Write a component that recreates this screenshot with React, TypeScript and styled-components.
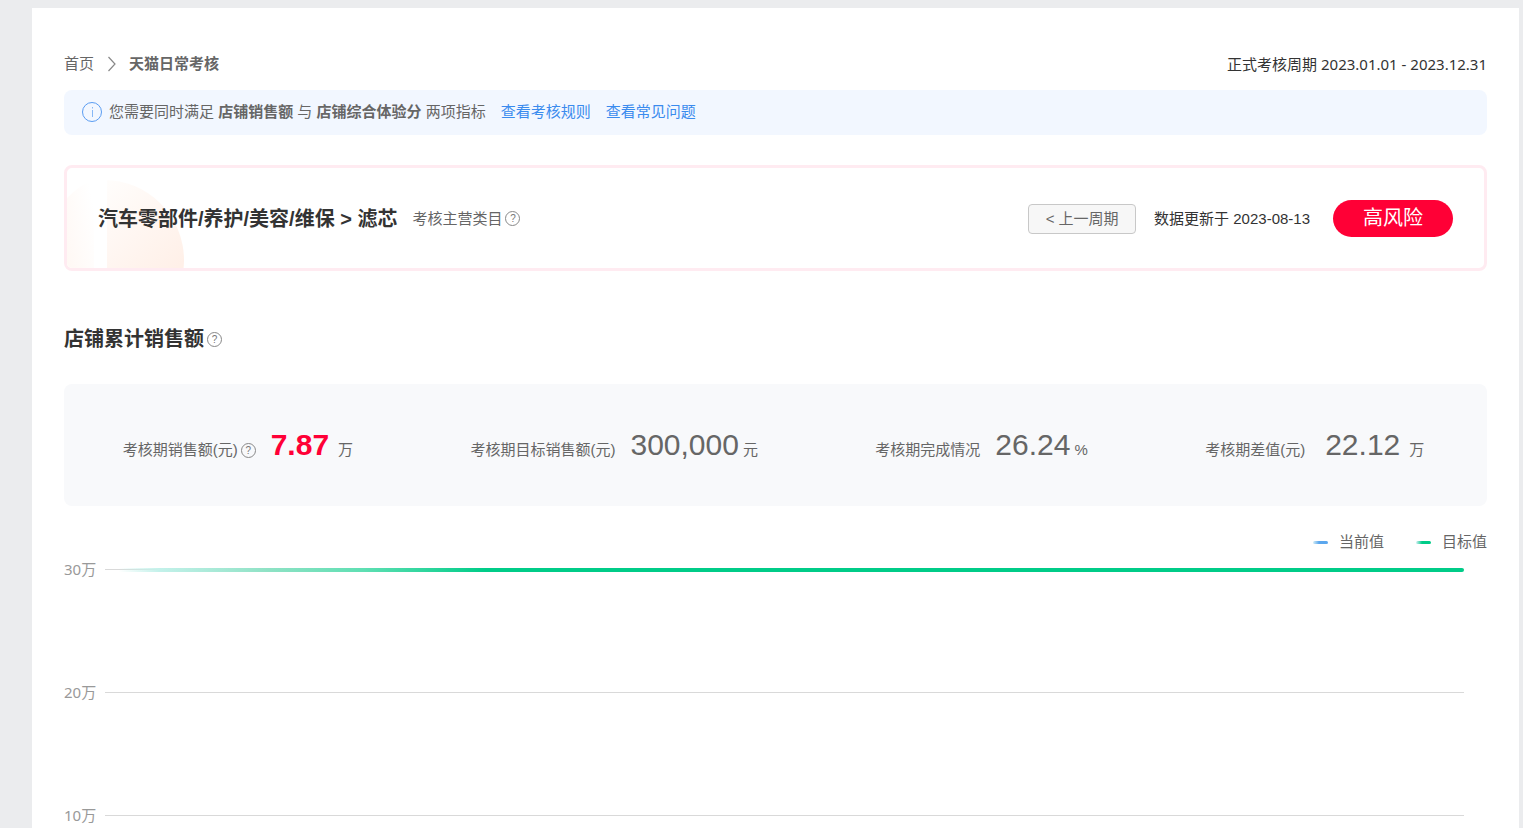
import React from "react";
import styled, { createGlobalStyle } from "styled-components";

const GlobalStyle = createGlobalStyle`
  * { box-sizing: border-box; }
  body {
    margin: 0;
    background: #ebecee;
    color: #333;
    font: 15px/20px "Liberation Sans", "Noto Sans CJK SC", sans-serif;
  }
`;

const Shell = styled.div`
  min-height: 100vh;
  padding: 8px 4px 0 32px;
  display: flex;
  flex-direction: column;
`;

const Page = styled.main`
  flex: 1;
  background: #fff;
  padding: 46px 32px 0;
`;

const TopBar = styled.header`
  display: flex;
  align-items: center;
  justify-content: space-between;
  margin-bottom: 16px;
`;

const Breadcrumb = styled.nav`
  display: flex;
  align-items: center;
  color: #666;
  svg { margin: 0 12px 0 13px; }
`;

const CrumbLink = styled.a`
  color: #666;
  text-decoration: none;
`;

const Period = styled.span`
  font-family: "Noto Sans", "Noto Sans CJK SC", sans-serif;
`;

const Notice = styled.section`
  display: flex;
  align-items: center;
  height: 45px;
  padding: 0 18px 2px;
  border-radius: 8px;
  background: #f2f7ff;
  color: #666;
  svg { margin-right: 7px; }
`;

const NoticeLink = styled.a`
  margin-left: 15px;
  color: #3a8bee;
  text-decoration: none;
`;

const CategoryCard = styled.section`
  position: relative;
  display: flex;
  align-items: center;
  height: 106px;
  margin-top: 30px;
  padding: 1px 31px 0;
  border: 3px solid #ffebf1;
  border-radius: 8px;
  overflow: hidden;
`;

const Backdrop = styled.svg`
  position: absolute;
  left: 0;
  bottom: 0;
`;

const CategoryTitle = styled.h1`
  position: relative;
  margin: 0 15px 0 0;
  font-size: 20px;
  line-height: 30px;
`;

const CardActions = styled.div`
  display: flex;
  align-items: center;
  margin-left: auto;
`;

const PrevButton = styled.button`
  width: 108px;
  height: 30px;
  padding: 0;
  border: 1px solid #c8c8c8;
  border-radius: 4px;
  background: #f7f7f7;
  color: #666;
  font: inherit;
`;

const Updated = styled.span`
  margin: 0 23px 0 18px;
`;

const RiskBadge = styled.strong`
  width: 120px;
  border-radius: 19px;
  background: #ff0036;
  color: #fff;
  font-size: 20px;
  font-weight: 400;
  line-height: 37px;
  text-align: center;
`;

const HelpButton = styled.button`
  display: inline-flex;
  align-items: center;
  justify-content: center;
  width: 15px;
  height: 15px;
  margin: 0 0 0 3px;
  padding: 0;
  border: 1px solid #888;
  border-radius: 50%;
  background: transparent;
  color: #777;
  font: 10px/13px "Liberation Sans", sans-serif;
`;

const LabelGroup = styled.span`
  display: flex;
  align-items: center;
  color: #666;
`;

const SectionHead = styled.div`
  display: flex;
  align-items: center;
  margin: 53px 0 30px;
`;

const SectionTitle = styled.h2`
  margin: 0;
  font-size: 20px;
  line-height: 30px;
`;

const Stats = styled.section`
  display: flex;
  align-items: center;
  justify-content: space-around;
  height: 122px;
  padding-right: 4px;
  border-radius: 8px;
  background: #f8f9fb;
`;

const Stat = styled.div`
  display: flex;
  align-items: baseline;
  color: #666;
`;

const StatValue = styled.span<{ $alert?: boolean; $labelGap: number; $unitGap: number }>`
  margin: 0 ${(p) => p.$unitGap}px 0 ${(p) => p.$labelGap}px;
  color: ${(p) => (p.$alert ? "#ff0036" : "#666")};
  font-size: 30px;
  font-weight: ${(p) => (p.$alert ? 700 : 400)};
  line-height: 40px;
`;

const Legend = styled.div`
  display: flex;
  justify-content: flex-end;
  gap: 32px;
  margin-top: 26px;
  color: #666;
`;

const LegendItem = styled.span<{ $color: string }>`
  display: flex;
  align-items: center;
  gap: 11px;
  &::before {
    content: "";
    width: 15px;
    height: 3px;
    border-radius: 2px;
    background: linear-gradient(90deg, #d5eef5, ${(p) => p.$color} 40%);
  }
`;

const Chart = styled.div`
  display: flex;
  flex-direction: column;
  gap: 103px;
  margin-top: 7px;
  padding-right: 23px;
`;

const GridRow = styled.div`
  display: flex;
  align-items: center;
  gap: 9px;
  color: #999;
  font-family: "Noto Sans", "Noto Sans CJK SC", sans-serif;
`;

const GridLine = styled.div`
  position: relative;
  flex: 1;
  height: 1px;
  background: #d9d9d9;
`;

const TargetLine = styled.div`
  position: absolute;
  inset: -1px 0 -2px;
  border-radius: 2px;
  background: linear-gradient(90deg, rgba(200, 240, 238, 0) 1%, #c3f1ea 4%, #8fe2c5 12%, #5fdfb3 19%, #00cc88 28%);
`;

const Help = () => <HelpButton type="button" aria-label="帮助">?</HelpButton>;

const stats = [
  { label: "考核期销售额(元)", value: "7.87", unit: "万", help: true, alert: true, labelGap: 15, unitGap: 9 },
  { label: "考核期目标销售额(元)", value: "300,000", unit: "元", labelGap: 15, unitGap: 4 },
  { label: "考核期完成情况", value: "26.24", unit: "%", labelGap: 15, unitGap: 4 },
  { label: "考核期差值(元)", value: "22.12", unit: "万", labelGap: 20, unitGap: 9 },
];

const ticks = ["30万", "20万", "10万"];

export default function App() {
  return (
    <Shell>
      <GlobalStyle />
      <Page>
        <TopBar>
          <Breadcrumb>
            <CrumbLink href="#">首页</CrumbLink>
            <svg width="10" height="16" viewBox="0 0 10 16" fill="none" stroke="#888" strokeWidth="1.2">
              <path d="M1.500 1L8 8L1.500 15" />
            </svg>
            <strong>天猫日常考核</strong>
          </Breadcrumb>
          <Period>正式考核周期 2023.01.01 - 2023.12.31</Period>
        </TopBar>

        <Notice>
          <svg width="20" height="20" viewBox="0 0 20 20" fill="none" stroke="#5a9cf2">
            <circle cx="10" cy="10" r="9.500" />
            <path d="M10.500 8v7M10.500 5v1.500" strokeOpacity="0.700" />
          </svg>
          <span>
            您需要同时满足 <strong>店铺销售额</strong> 与 <strong>店铺综合体验分</strong> 两项指标
          </span>
          <NoticeLink href="#">查看考核规则</NoticeLink>
          <NoticeLink href="#">查看常见问题</NoticeLink>
        </Notice>

        <CategoryCard>
          <Backdrop width="118" height="90" viewBox="0 0 118 90" aria-hidden="true">
            <defs>
              <linearGradient id="fadeRight" x1="0.450" y1="0" x2="0.950" y2="0.550">
                <stop offset="0" stopColor="#fffefd" />
                <stop offset="1" stopColor="#fff0e8" />
              </linearGradient>
              <linearGradient id="fadeLeft" x1="1" y1="0.300" x2="0" y2="1">
                <stop offset="0" stopColor="#fff" />
                <stop offset="1" stopColor="#fff8f4" />
              </linearGradient>
            </defs>
            <circle cx="37" cy="82" r="80" fill="url(#fadeRight)" />
            <rect width="40" height="90" fill="#fff" />
            <path d="M0 20Q14 6 27 2V90H0Z" fill="url(#fadeLeft)" />
          </Backdrop>
          <CategoryTitle>汽车零部件/养护/美容/维保 &gt; 滤芯</CategoryTitle>
          <LabelGroup>
            考核主营类目
            <Help />
          </LabelGroup>
          <CardActions>
            <PrevButton type="button">&lt; 上一周期</PrevButton>
            <Updated>数据更新于 2023-08-13</Updated>
            <RiskBadge>高风险</RiskBadge>
          </CardActions>
        </CategoryCard>

        <SectionHead>
          <SectionTitle>店铺累计销售额</SectionTitle>
          <Help />
        </SectionHead>

        <Stats>
          {stats.map((s) => (
            <Stat key={s.label}>
              <LabelGroup>
                {s.label}
                {s.help && <Help />}
              </LabelGroup>
              <StatValue $alert={s.alert} $labelGap={s.labelGap} $unitGap={s.unitGap}>
                {s.value}
              </StatValue>
              <span>{s.unit}</span>
            </Stat>
          ))}
        </Stats>

        <Legend>
          <LegendItem $color="#5ba7ee">当前值</LegendItem>
          <LegendItem $color="#00cc88">目标值</LegendItem>
        </Legend>
        <Chart>
          {ticks.map((t, i) => (
            <GridRow key={t}>
              <span>{t}</span>
              <GridLine>{i === 0 && <TargetLine />}</GridLine>
            </GridRow>
          ))}
        </Chart>
      </Page>
    </Shell>
  );
}
